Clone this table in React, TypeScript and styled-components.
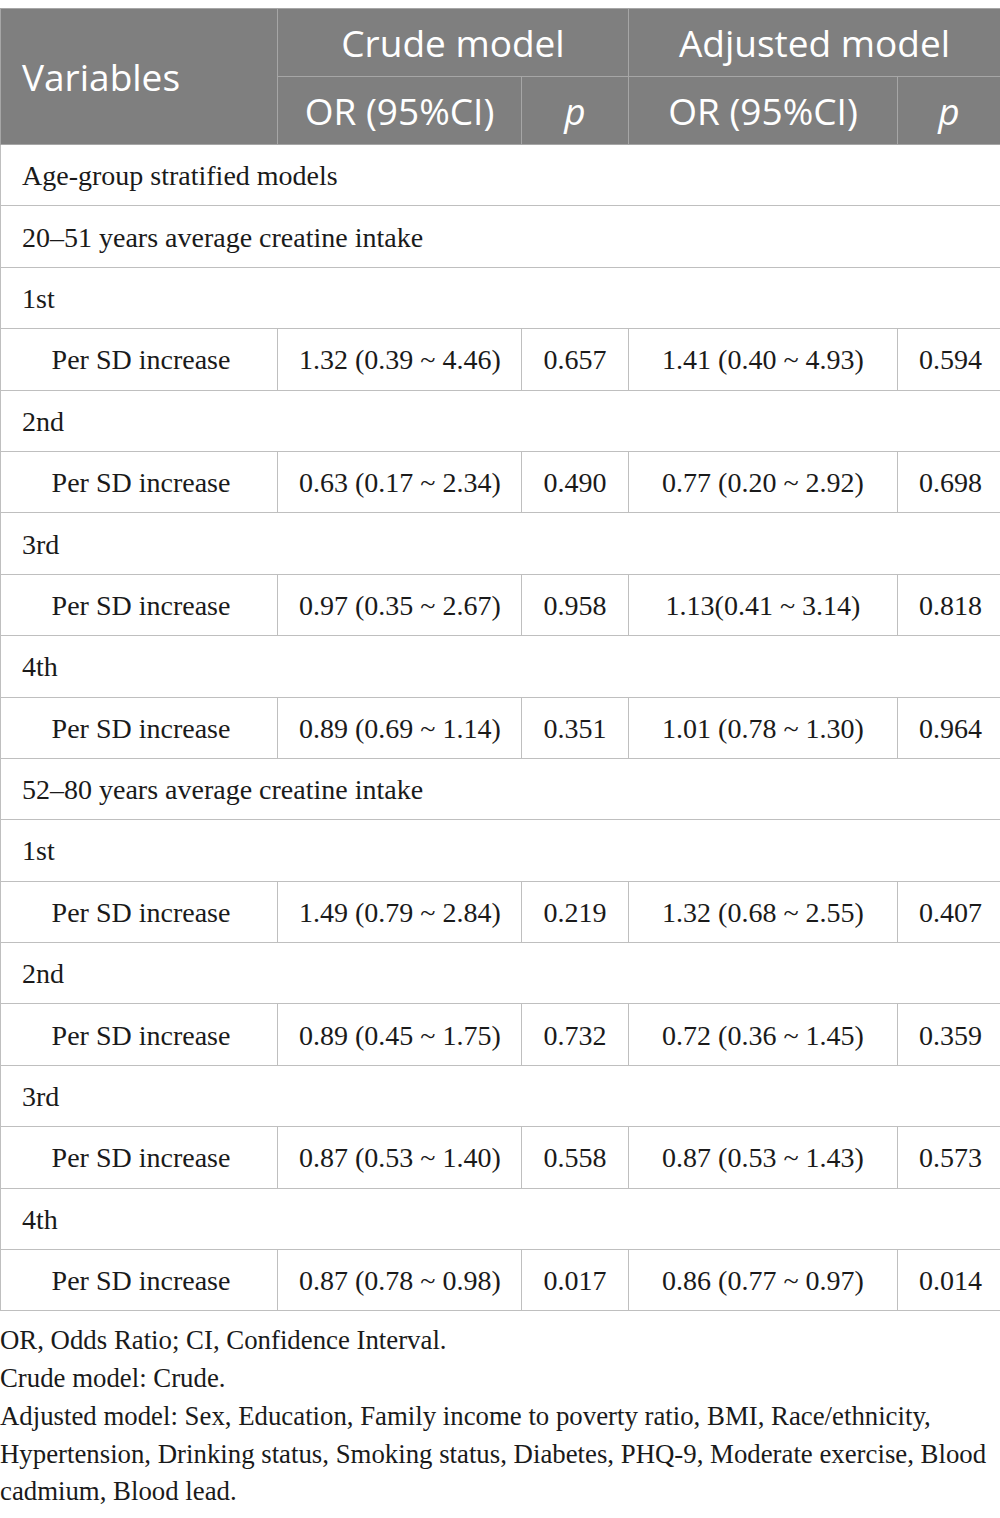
import React from "react";
import styled, { createGlobalStyle } from "styled-components";

const Global = createGlobalStyle`
  html, body { margin: 0; padding: 0; background: #ffffff; }
  body { padding-top: 8px; }
`;

const Page = styled.div`
  width: 1000px;
  font-family: "Liberation Serif", "Times New Roman", serif;
  color: #1a1a1a;
`;

const Table = styled.table`
  width: 1000px;
  border-collapse: collapse;
  table-layout: fixed;
`;

const HeadCell = styled.th<{ $italic?: boolean; $align?: string }>`
  background: #7f7f7f;
  color: #ffffff;
  font-family: "Open Sans", "Noto Sans", sans-serif;
  font-weight: 400;
  font-size: 37px;
  font-style: ${(p) => (p.$italic ? "italic" : "normal")};
  text-align: ${(p) => p.$align || "center"};
  border: 1px solid #a6a6a6;
  padding: 0 21px;
  height: 67px;
  line-height: 1;
`;

const Cell = styled.td<{ $align?: string; $indent?: boolean }>`
  border: 1px solid #bfbfbf;
  height: 58.4px;
  padding: 2px 0 0 ${(p) => (p.$indent ? "4px" : "21px")};
  padding-right: ${(p) => (p.$indent ? "0" : "21px")};
  text-align: ${(p) => p.$align || "center"};
  font-size: 28px;
  line-height: 1;
  white-space: nowrap;
`;

const Notes = styled.div`
  margin-top: 11px;
  font-size: 26.8px;
  line-height: 37.7px;
  color: #1a1a1a;
`;

type Row =
  | { kind: "label"; text: string }
  | { kind: "data"; a: string; b: string; c: string; d: string };

const rows: Row[] = [
  { kind: "label", text: "Age-group stratified models" },
  { kind: "label", text: "20–51 years average creatine intake" },
  { kind: "label", text: "1st" },
  { kind: "data", a: "1.32 (0.39 ~ 4.46)", b: "0.657", c: "1.41 (0.40 ~ 4.93)", d: "0.594" },
  { kind: "label", text: "2nd" },
  { kind: "data", a: "0.63 (0.17 ~ 2.34)", b: "0.490", c: "0.77 (0.20 ~ 2.92)", d: "0.698" },
  { kind: "label", text: "3rd" },
  { kind: "data", a: "0.97 (0.35 ~ 2.67)", b: "0.958", c: "1.13(0.41 ~ 3.14)", d: "0.818" },
  { kind: "label", text: "4th" },
  { kind: "data", a: "0.89 (0.69 ~ 1.14)", b: "0.351", c: "1.01 (0.78 ~ 1.30)", d: "0.964" },
  { kind: "label", text: "52–80 years average creatine intake" },
  { kind: "label", text: "1st" },
  { kind: "data", a: "1.49 (0.79 ~ 2.84)", b: "0.219", c: "1.32 (0.68 ~ 2.55)", d: "0.407" },
  { kind: "label", text: "2nd" },
  { kind: "data", a: "0.89 (0.45 ~ 1.75)", b: "0.732", c: "0.72 (0.36 ~ 1.45)", d: "0.359" },
  { kind: "label", text: "3rd" },
  { kind: "data", a: "0.87 (0.53 ~ 1.40)", b: "0.558", c: "0.87 (0.53 ~ 1.43)", d: "0.573" },
  { kind: "label", text: "4th" },
  { kind: "data", a: "0.87 (0.78 ~ 0.98)", b: "0.017", c: "0.86 (0.77 ~ 0.97)", d: "0.014" },
];

export default function App() {
  return (
    <Page>
      <Global />
      <Table>
        <colgroup>
          <col style={{ width: 277 }} />
          <col style={{ width: 244 }} />
          <col style={{ width: 107 }} />
          <col style={{ width: 269 }} />
          <col style={{ width: 103 }} />
        </colgroup>
        <thead>
          <tr>
            <HeadCell rowSpan={2} $align="left">Variables</HeadCell>
            <HeadCell colSpan={2}>Crude model</HeadCell>
            <HeadCell colSpan={2}>Adjusted model</HeadCell>
          </tr>
          <tr>
            <HeadCell>OR (95%CI)</HeadCell>
            <HeadCell $italic>p</HeadCell>
            <HeadCell>OR (95%CI)</HeadCell>
            <HeadCell $italic>p</HeadCell>
          </tr>
        </thead>
        <tbody>
          {rows.map((r, i) =>
            r.kind === "label" ? (
              <tr key={i}>
                <Cell colSpan={5} $align="left">{r.text}</Cell>
              </tr>
            ) : (
              <tr key={i}>
                <Cell $indent>Per SD increase</Cell>
                <Cell>{r.a}</Cell>
                <Cell>{r.b}</Cell>
                <Cell>{r.c}</Cell>
                <Cell>{r.d}</Cell>
              </tr>
            )
          )}
        </tbody>
      </Table>
      <Notes>
        OR, Odds Ratio; CI, Confidence Interval.
        <br />
        Crude model: Crude.
        <br />
        Adjusted model: Sex, Education, Family income to poverty ratio, BMI, Race/ethnicity,
        <br />
        Hypertension, Drinking status, Smoking status, Diabetes, PHQ-9, Moderate exercise, Blood
        <br />
        cadmium, Blood lead.
      </Notes>
    </Page>
  );
}
